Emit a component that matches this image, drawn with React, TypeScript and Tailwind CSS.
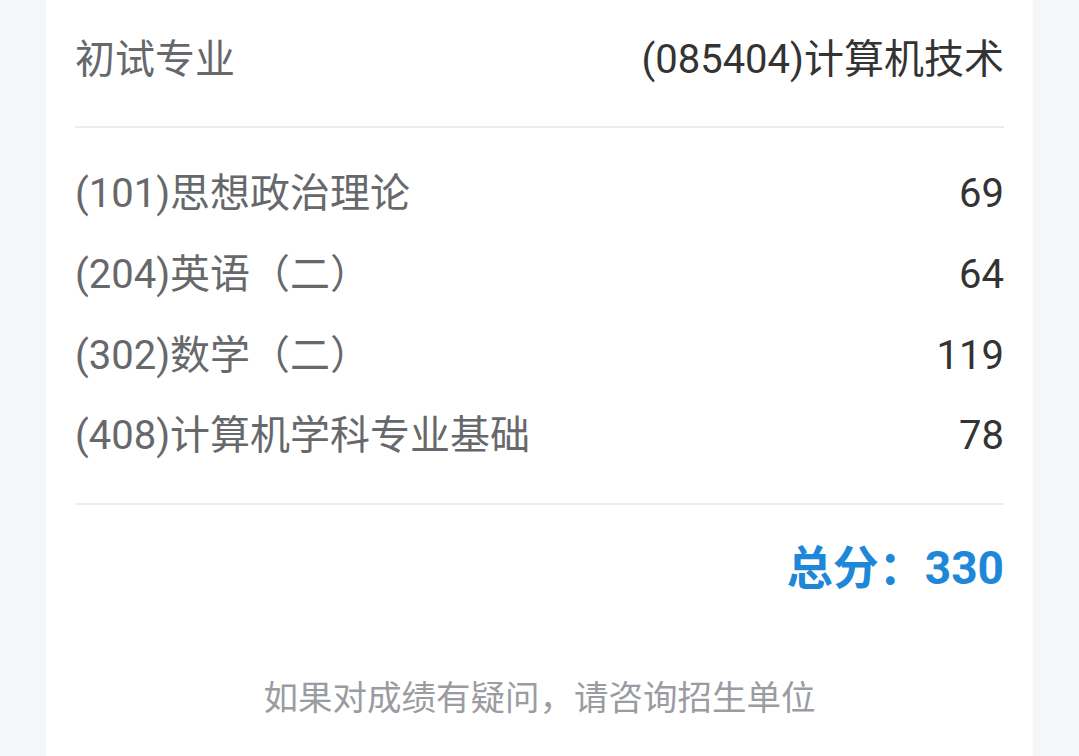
import React from 'react'

const subjects = [
  { name: '(101)思想政治理论', score: '69' },
  { name: '(204)英语（二）', score: '64' },
  { name: '(302)数学（二）', score: '119' },
  { name: '(408)计算机学科专业基础', score: '78' },
]

const App = () => {
  return (
    <div
      className="min-h-[756px] w-full bg-[#f5f6f8] px-[46px]"
      style={{ fontFamily: "Roboto, 'Noto Sans CJK SC', sans-serif" }}
    >
      <div className="min-h-[756px] bg-white px-[29px]">
        {/* 初试专业 */}
        <div className="flex items-center justify-between pt-[36px] pb-[42px] text-[40px] leading-[48px]">
          <span className="text-[#66686c]">初试专业</span>
          <span className="text-[#333333]">(085404)计算机技术</span>
        </div>
        <div className="h-[2px] bg-[#ececec]" />

        {/* 各科成绩 */}
        <div className="pt-[26px] pb-[26px]">
          {subjects.map((s) => (
            <div
              key={s.name}
              className="flex h-[80.67px] items-center justify-between text-[40px] leading-[48px]"
            >
              <span className="text-[#66686c]">{s.name}</span>
              <span className="text-[#333333]">{s.score}</span>
            </div>
          ))}
        </div>
        <div className="h-[2px] bg-[#ececec]" />

        {/* 总分 */}
        <div className="flex justify-end pt-[35px]">
          <span className="text-[46px] font-bold leading-[56px] text-[#1f87d8]">总分：330</span>
        </div>

        <div className="pt-[80px] text-center text-[34.5px] leading-[44px] text-[#9a9ca1]">
          如果对成绩有疑问，请咨询招生单位
        </div>
      </div>
    </div>
  )
}

export default App
